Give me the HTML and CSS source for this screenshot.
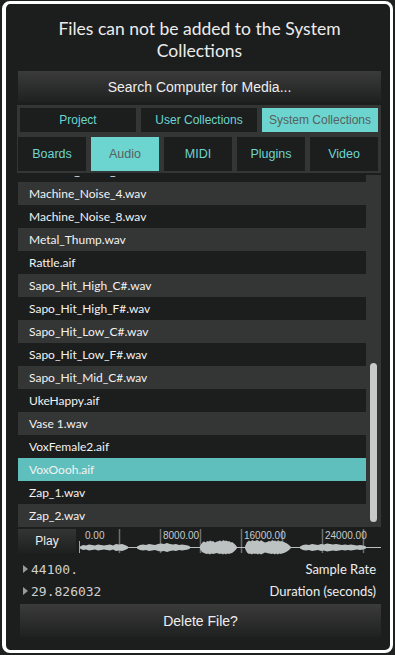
FILE: index.html
```html
<!DOCTYPE html>
<html lang="en">
<head>
  <meta charset="UTF-8" />
  <meta name="viewport" content="width=device-width, initial-scale=1" />
  <title>Media Browser</title>
  <link rel="stylesheet" href="styles.css">
</head>
<body>
  <div class="frame">
    <h1 class="title">Files can not be added to the System Collections</h1>
    <button class="bar-btn search">Search Computer for Media...</button>

    <div class="tabs">
      <div class="tab-row three">
        <div class="tab">Project</div>
        <div class="tab">User Collections</div>
        <div class="tab active">System Collections</div>
      </div>
      <div class="tab-row five">
        <div class="tab">Boards</div>
        <div class="tab active">Audio</div>
        <div class="tab">MIDI</div>
        <div class="tab">Plugins</div>
        <div class="tab">Video</div>
      </div>
    </div>

    <div class="list">
      <ul class="files">
        <li>Machine_Noise_3.wav</li>
        <li>Machine_Noise_4.wav</li>
        <li>Machine_Noise_8.wav</li>
        <li>Metal_Thump.wav</li>
        <li>Rattle.aif</li>
        <li>Sapo_Hit_High_C#.wav</li>
        <li>Sapo_Hit_High_F#.wav</li>
        <li>Sapo_Hit_Low_C#.wav</li>
        <li>Sapo_Hit_Low_F#.wav</li>
        <li>Sapo_Hit_Mid_C#.wav</li>
        <li>UkeHappy.aif</li>
        <li>Vase 1.wav</li>
        <li>VoxFemale2.aif</li>
        <li class="selected">VoxOooh.aif</li>
        <li>Zap_1.wav</li>
        <li>Zap_2.wav</li>
      </ul>
      <div class="thumb"></div>
    </div>

    <div class="player">
      <button class="play">Play</button>
      <svg class="wave" width="302" height="24" viewBox="0 0 302 24">
        <g class="ticks">
          <line x1="40.5" y1="0" x2="40.5" y2="24" />
          <line x1="81.5" y1="0" x2="81.5" y2="24" />
          <line x1="121.5" y1="0" x2="121.5" y2="24" />
          <line x1="162.5" y1="0" x2="162.5" y2="24" />
          <line x1="203.5" y1="0" x2="203.5" y2="24" />
          <line x1="243.5" y1="0" x2="243.5" y2="24" />
          <line x1="284.5" y1="0" x2="284.5" y2="24" />
        </g>
        <g class="labels">
          <text x="6" y="10">0.00</text>
          <text x="84" y="10">8000.00</text>
          <text x="165" y="10">16000.00</text>
          <text x="246" y="10">24000.00</text>
        </g>
        <line class="axis" x1="0" y1="18.5" x2="302" y2="18.5" />
        <g class="blobs">
          <polygon points="1,17.5 4,16 7,16.5 10,15.5 13,16 16,16.5 19,15.5 22,16 25,16.5 28,16 31,15.5 34,16.5 37,15 40,15.5 43,15 46,16 49,17.5 49,19.5 46,21 43,22 40,21.5 37,22 34,20.5 31,21.5 28,21 25,20.5 22,21 19,21.5 16,20.5 13,21 10,21.5 7,20.5 4,21 1,19.5" />
          <polygon points="58,17.5 61,16 64,15.5 67,16 70,15 73,15.5 76,16 79,15 82,14.5 85,15 88,14 91,15 94,15.5 97,15 100,16 103,15.5 106,16 109,16.5 111,17.5 111,19.5 109,20.5 106,21 103,21.5 100,21 97,22 94,21.5 91,22 88,23 85,22 82,22.5 79,22 76,21 73,21.5 70,22 67,21 64,21.5 61,21 58,19.5" />
          <polygon points="121,17 123,14 124,13 125,12.5 127,13.5 128,12 130,12.5 131,11.5 133,12.5 134,12 136,13.5 137,13 138,12.5 140,12 141,11.5 143,12.5 144,11 146,12 147,11.5 149,12.5 150,12 152,13.5 153,13 155,14.5 157,16.5 158,18 158,19 157,20.5 155,22.5 153,24 151,24.5 150,25 148,24.5 147,25.5 145,24.5 144,25.5 142,24.5 141,25 139,24.5 138,24 136,24.5 134,25 132,24.5 131,25.5 129,24.5 128,25 126,24.5 125,24 123,23 121,20" />
          <polygon points="166,17.5 168,13 169,12.5 170,11.5 172,12.5 173,11 175,12 176,12 178,11 179,11.5 181,12.5 182,11 184,12.5 186,13.5 188,13 190,12 192,12.5 193,11 195,12 196,11.5 198,12.5 199,11 201,12.5 202,12 205,13 208,14.5 210,16 212,18 212,19 210,21 208,22.5 205,24 203,24.5 202,25 200,24.5 199,25.5 197,24.5 196,25.5 194,24.5 193,25 190,24.5 188,24 186,23.5 184,24.5 182,25.5 180,24.5 179,25.5 177,24.5 176,25 174,24.5 173,25.5 171,24.5 170,25 168,23.5 166,19.5" />
          <polygon points="221,17.5 224,16 227,15.5 230,16 233,15 236,15.5 239,16 242,15 245,15.5 248,14.5 251,15 254,15.5 257,15 260,15.5 263,16 266,15.5 269,16 272,15.5 275,16 278,16.5 281,16 284,16.5 287,17.5 287,19.5 284,20.5 281,21 278,20.5 275,21 272,21.5 269,21 266,21.5 263,21 260,21.5 257,22 254,21.5 251,22 248,22.5 245,21.5 242,22 239,21 236,21.5 233,22 230,21 227,21.5 224,21 221,19.5" />
        </g>
        <line class="cursor" x1="0.5" y1="12" x2="0.5" y2="24" />
      </svg>
    </div>

    <div class="details">
      <div class="info">
        <span class="num"><i class="tri"></i>44100.</span>
        <span class="label">Sample Rate</span>
      </div>
      <div class="info">
        <span class="num"><i class="tri"></i>29.826032</span>
        <span class="label">Duration (seconds)</span>
      </div>
    </div>

    <button class="bar-btn delete">Delete File?</button>
  </div>
</body>
</html>
```

FILE: styles.css
```css
body {
  margin: 0;
  background: #1f2020;
  font-family: Lato, "Liberation Sans", sans-serif;
}
.frame {
  box-sizing: border-box;
  width: 391px;
  height: 652px;
  margin: 1px 0 0 2px;
  padding: 14px 9px 0 12px;
  border: 3px solid #fff;
  border-left-width: 4px;
  border-radius: 8px;
  background: #1c1e1e;
  overflow: hidden;
}
.frame > * {
  display: block;
}
.title {
  margin: 0;
  font-size: 17.5px;
  line-height: 22px;
  font-weight: normal;
  color: #ececec;
  text-align: center;
}
.bar-btn {
  width: 100%;
  border: 0;
  padding: 0;
  font-family: "Liberation Sans", Arial, sans-serif;
  font-size: 14px;
  color: #eee;
  background: linear-gradient(#3b3b3b, #1f2020);
}
.search {
  height: 31px;
  margin-top: 9px;
}
.tabs {
  margin: 3px 0 0 -1px;
  padding: 3px 3px 2px;
  background: #343535;
}
.tab-row {
  display: grid;
  gap: 5px;
}
.tab-row.three {
  grid-template-columns: repeat(3, 1fr);
  height: 24px;
}
.tab-row.five {
  grid-template-columns: repeat(5, 1fr);
  height: 34px;
  margin: 5px 0 0 -2px;
}
.tab {
  display: flex;
  align-items: center;
  justify-content: center;
  background: #1c1e1e;
  color: #6dd5cf;
  font-family: "Liberation Sans", Arial, sans-serif;
  font-size: 12px;
}
.tab-row.five .tab {
  font-size: 12.5px;
}
.tab.active {
  background: #6dd5cf;
  color: #56605f;
}
.list {
  position: relative;
  height: 352px;
  margin-top: 2px;
  padding-right: 15px;
  background: #343535;
  overflow: hidden;
}
.files {
  list-style: none;
  margin: -16px 0 0;
  padding: 0;
}
.files li {
  height: 23px;
  line-height: 23px;
  padding-left: 11px;
  font-size: 12px;
  color: #f2f2f2;
}
.files li:nth-child(odd) {
  background: #1c1e1e;
}
.files li.selected {
  background: #5fbfbd;
}
.thumb {
  position: absolute;
  top: 188px;
  right: 4px;
  width: 7px;
  height: 159px;
  border-radius: 4px;
  background: #c9c9c9;
}
.player {
  display: flex;
  gap: 3px;
  height: 24px;
  margin-top: 2px;
}
.play {
  width: 59px;
  border: 0;
  padding: 0;
  font-family: "Liberation Sans", Arial, sans-serif;
  font-size: 12px;
  color: #eee;
  background: linear-gradient(#333434, #1e2020);
}
.wave {
  overflow: visible;
}
.ticks line {
  stroke: #6c6e6e;
  stroke-width: 1.5;
}
.labels text {
  font-family: "Liberation Sans", Arial, sans-serif;
  font-size: 10px;
  fill: #c6caca;
}
.axis {
  stroke: #b8bebe;
  stroke-width: 1;
}
.blobs polygon {
  fill: #bcc2c2;
}
.cursor {
  stroke: #5fbfbd;
  stroke-width: 1;
}
.details {
  margin-top: 5px;
}
.info {
  display: flex;
  justify-content: space-between;
  align-items: center;
  height: 22px;
  padding: 0 5px;
}
.num {
  display: flex;
  align-items: center;
  font-family: "DejaVu Sans Mono", monospace;
  font-size: 13px;
  color: #cfcfcf;
}
.tri {
  width: 0;
  height: 0;
  margin-right: 3px;
  border-top: 4px solid transparent;
  border-bottom: 4px solid transparent;
  border-left: 5px solid #9a9a9a;
}
.label {
  font-size: 13px;
  color: #eee;
}
.delete {
  width: calc(100% - 2px);
  height: 33px;
  margin: 2px 0 0 2px;
}
```
